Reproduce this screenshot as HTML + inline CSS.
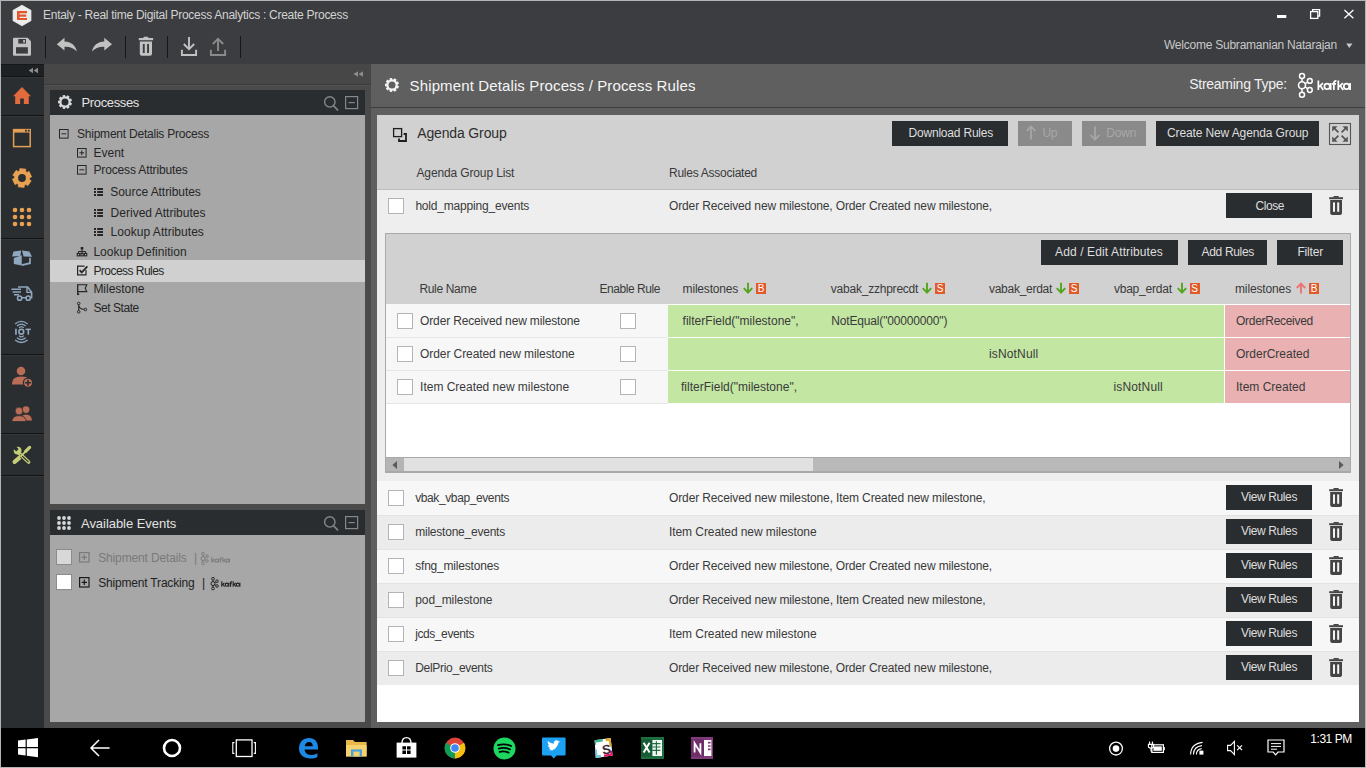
<!DOCTYPE html>
<html><head><meta charset="utf-8">
<style>
*{box-sizing:border-box;margin:0;padding:0}
html,body{width:1366px;height:768px;overflow:hidden;background:#b4b4b4;font-family:"Liberation Sans",sans-serif;position:relative}
.a{position:absolute}
.t{position:absolute;white-space:nowrap;line-height:1}
svg{position:absolute;overflow:visible}

</style></head><body>
<div class="a" style="left:1px;top:1px;width:1364px;height:63px;background:#3b3d40;"></div>
<div class="a" style="left:1px;top:64px;width:43px;height:664px;background:#2b2e31;"></div>
<div class="a" style="left:1px;top:64px;width:43px;height:12px;background:#1e2124;"></div>
<div class="a" style="left:1px;top:64px;width:43px;height:1px;background:#15171a;"></div>
<div class="a" style="left:1px;top:76px;width:43px;height:1px;background:#111315;"></div>
<div class="a" style="left:1px;top:77px;width:43px;height:1px;background:#34373a;"></div>
<div class="a" style="left:1px;top:115px;width:43px;height:1px;background:#111315;"></div>
<div class="a" style="left:1px;top:116px;width:43px;height:1px;background:#34373a;"></div>
<div class="a" style="left:1px;top:238px;width:43px;height:1px;background:#111315;"></div>
<div class="a" style="left:1px;top:239px;width:43px;height:1px;background:#34373a;"></div>
<div class="a" style="left:1px;top:354px;width:43px;height:1px;background:#111315;"></div>
<div class="a" style="left:1px;top:355px;width:43px;height:1px;background:#34373a;"></div>
<div class="a" style="left:1px;top:433px;width:43px;height:1px;background:#111315;"></div>
<div class="a" style="left:1px;top:434px;width:43px;height:1px;background:#34373a;"></div>
<div class="a" style="left:1px;top:475px;width:43px;height:1px;background:#111315;"></div>
<div class="a" style="left:1px;top:476px;width:43px;height:1px;background:#34373a;"></div>
<div class="a" style="left:44px;top:64px;width:327px;height:664px;background:#4a4a4a;"></div>
<div class="a" style="left:44px;top:64px;width:327px;height:20px;background:#474747;"></div>
<div class="a" style="left:44px;top:84px;width:327px;height:1px;background:#3a3a3a;"></div>
<div class="a" style="left:44px;top:85px;width:327px;height:1px;background:#545454;"></div>
<div class="a" style="left:50px;top:90px;width:315px;height:25px;background:#2a2d30;"></div>
<div class="a" style="left:50px;top:115px;width:315px;height:389px;background:#a7a7a7;"></div>
<div class="a" style="left:50px;top:260px;width:315px;height:22px;background:#d0d0d0;"></div>
<div class="a" style="left:50px;top:510px;width:315px;height:25px;background:#2a2d30;"></div>
<div class="a" style="left:50px;top:535px;width:315px;height:187px;background:#a7a7a7;"></div>
<div class="a" style="left:371px;top:64px;width:994px;height:664px;background:#5f5f5f;"></div>
<div class="a" style="left:371px;top:107px;width:994px;height:1px;background:#3d3d3d;"></div>
<div class="a" style="left:377px;top:115px;width:982px;height:607px;background:#ffffff;"></div>
<div class="a" style="left:377px;top:115px;width:982px;height:74px;background:#d1d1d1;"></div>
<div class="a" style="left:377px;top:189px;width:982px;height:1px;background:#bcbcbc;"></div>
<div class="a" style="left:377px;top:190px;width:982px;height:291px;background:#eeeeee;"></div>
<div class="a" style="left:385px;top:233px;width:966px;height:240px;background:#ffffff;border:1px solid #a9a9a9;"></div>
<div class="a" style="left:386px;top:234px;width:964px;height:70px;background:#d1d1d1;"></div>
<div class="a" style="left:386px;top:304px;width:964px;height:33px;background:#f7f7f7;"></div>
<div class="a" style="left:668px;top:304px;width:557px;height:33px;background:#c3e6a3;"></div>
<div class="a" style="left:1225px;top:304px;width:125px;height:33px;background:#e9b1b1;"></div>
<div class="a" style="left:386px;top:337px;width:282px;height:1px;background:#e6e6e6;"></div>
<div class="a" style="left:668px;top:337px;width:682px;height:1px;background:#ffffff;"></div>
<div class="a" style="left:386px;top:338px;width:964px;height:32px;background:#f7f7f7;"></div>
<div class="a" style="left:668px;top:338px;width:557px;height:32px;background:#c3e6a3;"></div>
<div class="a" style="left:1225px;top:338px;width:125px;height:32px;background:#e9b1b1;"></div>
<div class="a" style="left:386px;top:370px;width:282px;height:1px;background:#e6e6e6;"></div>
<div class="a" style="left:668px;top:370px;width:682px;height:1px;background:#ffffff;"></div>
<div class="a" style="left:386px;top:371px;width:964px;height:32px;background:#f7f7f7;"></div>
<div class="a" style="left:668px;top:371px;width:557px;height:32px;background:#c3e6a3;"></div>
<div class="a" style="left:1225px;top:371px;width:125px;height:32px;background:#e9b1b1;"></div>
<div class="a" style="left:386px;top:403px;width:282px;height:1px;background:#e6e6e6;"></div>
<div class="a" style="left:668px;top:403px;width:682px;height:1px;background:#ffffff;"></div>
<div class="a" style="left:668px;top:304px;width:682px;height:1px;background:#ffffff;"></div>
<div class="a" style="left:1224px;top:304px;width:1px;height:99px;background:#ffffff;"></div>
<div class="a" style="left:386px;top:457px;width:964px;height:15px;background:#a9a9a9;"></div>
<div class="a" style="left:386px;top:458px;width:964px;height:13px;background:#b9b9b9;"></div>
<div class="a" style="left:386px;top:458px;width:18px;height:13px;background:#b4b4b4;"></div>
<div class="a" style="left:404px;top:458px;width:409px;height:13px;background:#e1e1e1;"></div>
<div class="a" style="left:377px;top:481px;width:982px;height:34px;background:#f7f7f7;"></div>
<div class="a" style="left:377px;top:515px;width:982px;height:34px;background:#ececec;"></div>
<div class="a" style="left:377px;top:515px;width:982px;height:1px;background:#e3e3e3;"></div>
<div class="a" style="left:377px;top:549px;width:982px;height:34px;background:#f7f7f7;"></div>
<div class="a" style="left:377px;top:549px;width:982px;height:1px;background:#e3e3e3;"></div>
<div class="a" style="left:377px;top:583px;width:982px;height:34px;background:#ececec;"></div>
<div class="a" style="left:377px;top:583px;width:982px;height:1px;background:#e3e3e3;"></div>
<div class="a" style="left:377px;top:617px;width:982px;height:34px;background:#f7f7f7;"></div>
<div class="a" style="left:377px;top:617px;width:982px;height:1px;background:#e3e3e3;"></div>
<div class="a" style="left:377px;top:651px;width:982px;height:34px;background:#ececec;"></div>
<div class="a" style="left:377px;top:651px;width:982px;height:1px;background:#e3e3e3;"></div>
<div class="a" style="left:1px;top:728px;width:1364px;height:39px;background:#000000;"></div>
<div class="t" style="left:43px;top:9.00px;font-size:12px;color:#d2d2d2;font-weight:normal;font-family:'Liberation Sans';letter-spacing:-0.270px;">Entaly - Real time Digital Process Analytics : Create Process</div>
<div class="t" style="left:1164px;top:39.00px;font-size:12px;color:#c8c8c8;font-weight:normal;font-family:'Liberation Sans';letter-spacing:-0.237px;">Welcome Subramanian Natarajan</div>
<div class="t" style="left:81.5px;top:96.00px;font-size:13px;color:#e2e2e2;font-weight:normal;font-family:'Liberation Sans';letter-spacing:-0.356px;">Processes</div>
<div class="t" style="left:81px;top:517.00px;font-size:13px;color:#e2e2e2;font-weight:normal;font-family:'Liberation Sans';letter-spacing:-0.042px;">Available Events</div>
<div class="t" style="left:77px;top:128.00px;font-size:12px;color:#262626;font-weight:normal;font-family:'Liberation Sans';letter-spacing:-0.225px;">Shipment Detalis Process</div>
<div class="t" style="left:93.5px;top:147.00px;font-size:12px;color:#262626;font-weight:normal;font-family:'Liberation Sans';">Event</div>
<div class="t" style="left:93.5px;top:164.00px;font-size:12px;color:#262626;font-weight:normal;font-family:'Liberation Sans';letter-spacing:-0.145px;">Process Attributes</div>
<div class="t" style="left:110.3px;top:186.00px;font-size:12px;color:#262626;font-weight:normal;font-family:'Liberation Sans';letter-spacing:-0.052px;">Source Attributes</div>
<div class="t" style="left:110.6px;top:207.00px;font-size:12px;color:#262626;font-weight:normal;font-family:'Liberation Sans';letter-spacing:0.010px;">Derived Attributes</div>
<div class="t" style="left:110.6px;top:226.00px;font-size:12px;color:#262626;font-weight:normal;font-family:'Liberation Sans';letter-spacing:0.033px;">Lookup Attributes</div>
<div class="t" style="left:93.4px;top:246.00px;font-size:12px;color:#262626;font-weight:normal;font-family:'Liberation Sans';letter-spacing:0.033px;">Lookup Definition</div>
<div class="t" style="left:93.4px;top:265.00px;font-size:12px;color:#262626;font-weight:normal;font-family:'Liberation Sans';letter-spacing:-0.537px;">Process Rules</div>
<div class="t" style="left:93.4px;top:283.00px;font-size:12px;color:#262626;font-weight:normal;font-family:'Liberation Sans';letter-spacing:-0.029px;">Milestone</div>
<div class="t" style="left:93.4px;top:302.00px;font-size:12px;color:#262626;font-weight:normal;font-family:'Liberation Sans';letter-spacing:-0.442px;">Set State</div>
<div class="t" style="left:98.2px;top:552.00px;font-size:12px;color:#7a7a7a;font-weight:normal;font-family:'Liberation Sans';letter-spacing:-0.145px;">Shipment Details</div>
<div class="t" style="left:194px;top:552.00px;font-size:12px;color:#7a7a7a;font-weight:normal;font-family:'Liberation Sans';">|</div>
<div class="t" style="left:98.2px;top:577.00px;font-size:12px;color:#222222;font-weight:normal;font-family:'Liberation Sans';letter-spacing:-0.182px;">Shipment Tracking</div>
<div class="t" style="left:202px;top:577.00px;font-size:12px;color:#222222;font-weight:normal;font-family:'Liberation Sans';">|</div>
<div class="t" style="left:409.6px;top:78.00px;font-size:15px;color:#f6f6f6;font-weight:normal;font-family:'Liberation Sans';letter-spacing:0.126px;">Shipment Detalis Process / Process Rules</div>
<div class="t" style="left:1189.2px;top:77.00px;font-size:14px;color:#f0f0f0;font-weight:normal;font-family:'Liberation Sans';letter-spacing:-0.259px;">Streaming Type:</div>
<div class="t" style="left:417.2px;top:126.00px;font-size:14px;color:#2e2e2e;font-weight:normal;font-family:'Liberation Sans';letter-spacing:-0.140px;">Agenda Group</div>
<div class="t" style="left:416.5px;top:167.00px;font-size:12px;color:#3a3a3a;font-weight:normal;font-family:'Liberation Sans';letter-spacing:-0.134px;">Agenda Group List</div>
<div class="t" style="left:669px;top:167.00px;font-size:12px;color:#3a3a3a;font-weight:normal;font-family:'Liberation Sans';letter-spacing:-0.254px;">Rules Associated</div>
<div class="t" style="left:415.4px;top:200.00px;font-size:12px;color:#3a3a3a;font-weight:normal;font-family:'Liberation Sans';letter-spacing:-0.191px;">hold_mapping_events</div>
<div class="t" style="left:669px;top:200.00px;font-size:12px;color:#3a3a3a;font-weight:normal;font-family:'Liberation Sans';letter-spacing:-0.135px;">Order Received new milestone, Order Created new milestone,</div>
<div class="a" style="left:892px;top:121px;width:116px;height:25px;background:#2a2d30;"></div>
<div class="a" style="left:1156px;top:121px;width:163px;height:25px;background:#2a2d30;"></div>
<div class="a" style="left:1226px;top:193px;width:86px;height:25px;background:#2a2d30;"></div>
<div class="a" style="left:1041px;top:240px;width:137px;height:25px;background:#2a2d30;"></div>
<div class="a" style="left:1188px;top:240px;width:79px;height:25px;background:#2a2d30;"></div>
<div class="a" style="left:1277px;top:240px;width:66px;height:25px;background:#2a2d30;"></div>
<div class="a" style="left:1018px;top:121px;width:54px;height:25px;background:#8a8a8a;"></div>
<div class="a" style="left:1082px;top:121px;width:64px;height:25px;background:#8a8a8a;"></div>
<div class="t" style="left:908.5px;top:127.00px;font-size:12px;color:#dedede;font-weight:normal;font-family:'Liberation Sans';letter-spacing:-0.199px;">Download Rules</div>
<div class="t" style="left:1042.5px;top:127.00px;font-size:12px;color:#a8a8a8;font-weight:normal;font-family:'Liberation Sans';letter-spacing:-0.522px;">Up</div>
<div class="t" style="left:1106.2px;top:127.00px;font-size:12px;color:#a8a8a8;font-weight:normal;font-family:'Liberation Sans';letter-spacing:-0.147px;">Down</div>
<div class="t" style="left:1167px;top:127.00px;font-size:12px;color:#dedede;font-weight:normal;font-family:'Liberation Sans';letter-spacing:-0.121px;">Create New Agenda Group</div>
<div class="t" style="left:1255.6px;top:200.00px;font-size:12px;color:#dedede;font-weight:normal;font-family:'Liberation Sans';letter-spacing:-0.458px;">Close</div>
<div class="t" style="left:1055px;top:246.00px;font-size:12px;color:#dedede;font-weight:normal;font-family:'Liberation Sans';letter-spacing:0.124px;">Add / Edit Attributes</div>
<div class="t" style="left:1201.5px;top:246.00px;font-size:12px;color:#dedede;font-weight:normal;font-family:'Liberation Sans';letter-spacing:-0.319px;">Add Rules</div>
<div class="t" style="left:1297.4px;top:246.00px;font-size:12px;color:#dedede;font-weight:normal;font-family:'Liberation Sans';letter-spacing:-0.145px;">Filter</div>
<div class="t" style="left:419.4px;top:283.00px;font-size:12px;color:#3a3a3a;font-weight:normal;font-family:'Liberation Sans';letter-spacing:-0.326px;">Rule Name</div>
<div class="t" style="left:599.5px;top:283.00px;font-size:12px;color:#3a3a3a;font-weight:normal;font-family:'Liberation Sans';letter-spacing:-0.454px;">Enable Rule</div>
<div class="t" style="left:682.6px;top:283.00px;font-size:12px;color:#3a3a3a;font-weight:normal;font-family:'Liberation Sans';letter-spacing:-0.186px;">milestones</div>
<div class="t" style="left:830.8px;top:283.00px;font-size:12px;color:#3a3a3a;font-weight:normal;font-family:'Liberation Sans';letter-spacing:-0.222px;">vabak_zzhprecdt</div>
<div class="t" style="left:989px;top:283.00px;font-size:12px;color:#3a3a3a;font-weight:normal;font-family:'Liberation Sans';letter-spacing:-0.277px;">vabak_erdat</div>
<div class="t" style="left:1113.9px;top:283.00px;font-size:12px;color:#3a3a3a;font-weight:normal;font-family:'Liberation Sans';letter-spacing:-0.205px;">vbap_erdat</div>
<div class="t" style="left:1235px;top:283.00px;font-size:12px;color:#3a3a3a;font-weight:normal;font-family:'Liberation Sans';letter-spacing:-0.136px;">milestones</div>
<div class="t" style="left:420.1px;top:315.00px;font-size:12px;color:#3a3a3a;font-weight:normal;font-family:'Liberation Sans';letter-spacing:-0.156px;">Order Received new milestone</div>
<div class="t" style="left:420.1px;top:348.00px;font-size:12px;color:#3a3a3a;font-weight:normal;font-family:'Liberation Sans';letter-spacing:-0.083px;">Order Created new milestone</div>
<div class="t" style="left:420.1px;top:381.00px;font-size:12px;color:#3a3a3a;font-weight:normal;font-family:'Liberation Sans';letter-spacing:-0.016px;">Item Created new milestone</div>
<div class="t" style="left:682.6px;top:315.00px;font-size:12px;color:#3a3a3a;font-weight:normal;font-family:'Liberation Sans';letter-spacing:0.005px;">filterField("milestone",</div>
<div class="t" style="left:831.3px;top:315.00px;font-size:12px;color:#3a3a3a;font-weight:normal;font-family:'Liberation Sans';letter-spacing:-0.164px;">NotEqual("00000000")</div>
<div class="t" style="left:1236px;top:315.00px;font-size:12px;color:#3a3a3a;font-weight:normal;font-family:'Liberation Sans';letter-spacing:-0.285px;">OrderReceived</div>
<div class="t" style="left:989px;top:348.00px;font-size:12px;color:#3a3a3a;font-weight:normal;font-family:'Liberation Sans';letter-spacing:0.154px;">isNotNull</div>
<div class="t" style="left:1236px;top:348.00px;font-size:12px;color:#3a3a3a;font-weight:normal;font-family:'Liberation Sans';">OrderCreated</div>
<div class="t" style="left:681px;top:381.00px;font-size:12px;color:#3a3a3a;font-weight:normal;font-family:'Liberation Sans';letter-spacing:0.005px;">filterField("milestone",</div>
<div class="t" style="left:1113.5px;top:381.00px;font-size:12px;color:#3a3a3a;font-weight:normal;font-family:'Liberation Sans';letter-spacing:0.154px;">isNotNull</div>
<div class="t" style="left:1236px;top:381.00px;font-size:12px;color:#3a3a3a;font-weight:normal;font-family:'Liberation Sans';">Item Created</div>
<div class="t" style="left:415.2px;top:492.00px;font-size:12px;color:#3a3a3a;font-weight:normal;font-family:'Liberation Sans';letter-spacing:-0.392px;">vbak_vbap_events</div>
<div class="t" style="left:669px;top:492.00px;font-size:12px;color:#3a3a3a;font-weight:normal;font-family:'Liberation Sans';letter-spacing:-0.123px;">Order Received new milestone, Item Created new milestone,</div>
<div class="a" style="left:1226px;top:485px;width:86px;height:25px;background:#2a2d30;"></div>
<div class="t" style="left:1241px;top:491.00px;font-size:12px;color:#dedede;font-weight:normal;font-family:'Liberation Sans';letter-spacing:-0.381px;">View Rules</div>
<div class="t" style="left:415.2px;top:526.00px;font-size:12px;color:#3a3a3a;font-weight:normal;font-family:'Liberation Sans';letter-spacing:-0.224px;">milestone_events</div>
<div class="t" style="left:669px;top:526.00px;font-size:12px;color:#3a3a3a;font-weight:normal;font-family:'Liberation Sans';letter-spacing:-0.073px;">Item Created new milestone</div>
<div class="a" style="left:1226px;top:519px;width:86px;height:25px;background:#2a2d30;"></div>
<div class="t" style="left:1241px;top:525.00px;font-size:12px;color:#dedede;font-weight:normal;font-family:'Liberation Sans';letter-spacing:-0.381px;">View Rules</div>
<div class="t" style="left:415.2px;top:560.00px;font-size:12px;color:#3a3a3a;font-weight:normal;font-family:'Liberation Sans';letter-spacing:-0.195px;">sfng_milestones</div>
<div class="t" style="left:669px;top:560.00px;font-size:12px;color:#3a3a3a;font-weight:normal;font-family:'Liberation Sans';letter-spacing:-0.135px;">Order Received new milestone, Order Created new milestone,</div>
<div class="a" style="left:1226px;top:553px;width:86px;height:25px;background:#2a2d30;"></div>
<div class="t" style="left:1241px;top:559.00px;font-size:12px;color:#dedede;font-weight:normal;font-family:'Liberation Sans';letter-spacing:-0.381px;">View Rules</div>
<div class="t" style="left:415.2px;top:594.00px;font-size:12px;color:#3a3a3a;font-weight:normal;font-family:'Liberation Sans';letter-spacing:-0.059px;">pod_milestone</div>
<div class="t" style="left:669px;top:594.00px;font-size:12px;color:#3a3a3a;font-weight:normal;font-family:'Liberation Sans';letter-spacing:-0.123px;">Order Received new milestone, Item Created new milestone,</div>
<div class="a" style="left:1226px;top:587px;width:86px;height:25px;background:#2a2d30;"></div>
<div class="t" style="left:1241px;top:593.00px;font-size:12px;color:#dedede;font-weight:normal;font-family:'Liberation Sans';letter-spacing:-0.381px;">View Rules</div>
<div class="t" style="left:415.2px;top:628.00px;font-size:12px;color:#3a3a3a;font-weight:normal;font-family:'Liberation Sans';letter-spacing:-0.416px;">jcds_events</div>
<div class="t" style="left:669px;top:628.00px;font-size:12px;color:#3a3a3a;font-weight:normal;font-family:'Liberation Sans';letter-spacing:-0.073px;">Item Created new milestone</div>
<div class="a" style="left:1226px;top:621px;width:86px;height:25px;background:#2a2d30;"></div>
<div class="t" style="left:1241px;top:627.00px;font-size:12px;color:#dedede;font-weight:normal;font-family:'Liberation Sans';letter-spacing:-0.381px;">View Rules</div>
<div class="t" style="left:415.2px;top:662.00px;font-size:12px;color:#3a3a3a;font-weight:normal;font-family:'Liberation Sans';letter-spacing:-0.291px;">DelPrio_events</div>
<div class="t" style="left:669px;top:662.00px;font-size:12px;color:#3a3a3a;font-weight:normal;font-family:'Liberation Sans';letter-spacing:-0.135px;">Order Received new milestone, Order Created new milestone,</div>
<div class="a" style="left:1226px;top:655px;width:86px;height:25px;background:#2a2d30;"></div>
<div class="t" style="left:1241px;top:661.00px;font-size:12px;color:#dedede;font-weight:normal;font-family:'Liberation Sans';letter-spacing:-0.381px;">View Rules</div>
<div class="t" style="left:1310.3px;top:733.00px;font-size:12px;color:#ffffff;font-weight:normal;font-family:'Liberation Sans';letter-spacing:-0.458px;">1:31 PM</div>
<svg style="left:0px;top:0px;" width="44" height="30" viewBox="0 0 44 30"><path d="M22.00,5.40 L30.75,10.45 L30.75,20.55 L22.00,25.60 L13.25,20.55 L13.25,10.45Z" fill="#ececec" stroke="#ececec" stroke-width="1.2" stroke-linejoin="round"/><path d="M17,11 H27 V13.2 H19.6 V14.6 H26.2 V16.7 H19.6 V17.9 H27 V20.1 H17 Z" fill="#e2582a"/></svg>
<svg style="left:1270px;top:0px;" width="96" height="30" viewBox="0 0 96 30"><rect x="7" y="15" width="9.3" height="3" fill="#fff"/><rect x="40.6" y="11.6" width="7.2" height="6.8" fill="none" stroke="#fff" stroke-width="1.3"/><path d="M42.6,11.6 V9.6 H49.6 V16.2 H47.8" fill="none" stroke="#fff" stroke-width="1.3"/><path d="M74.4,10 L83.4,18.2 M83.4,10 L74.4,18.2" stroke="#fff" stroke-width="1.3"/></svg>
<svg style="left:12px;top:37px;" width="20" height="20" viewBox="0 0 20 20"><path d="M1,2 Q1,0.8 2.2,0.8 H15.6 L19,4.2 V17.6 Q19,18.8 17.8,18.8 H2.2 Q1,18.8 1,17.6 Z" fill="#c2c2c2"/><rect x="6.3" y="2" width="7.7" height="4.6" fill="#3b3d40"/><rect x="11.2" y="3" width="1.7" height="2.6" fill="#c2c2c2"/><rect x="4" y="10.2" width="11.9" height="6.4" fill="#3b3d40"/></svg>
<div class="a" style="left:45px;top:36px;width:1px;height:22px;background:#161718;"></div>
<div class="a" style="left:125px;top:36px;width:1px;height:22px;background:#161718;"></div>
<div class="a" style="left:167px;top:36px;width:1px;height:22px;background:#161718;"></div>
<div class="a" style="left:240px;top:36px;width:1px;height:22px;background:#161718;"></div>
<svg style="left:56px;top:37px;" width="22" height="17" viewBox="0 0 22 17"><path d="M0.8,7.2 L8.5,0.8 V4.6 C15,4.8 19.8,8.6 20.8,14.6 C18,11.2 13.8,9.6 8.5,9.8 V13.6 Z" fill="#c2c2c2"/></svg>
<svg style="left:91px;top:37px;" width="22" height="17" viewBox="0 0 22 17"><path d="M21,7.2 L13.3,0.8 V4.6 C6.8,4.8 2,8.6 1,14.6 C3.8,11.2 8,9.6 13.3,9.8 V13.6 Z" fill="#c2c2c2"/></svg>
<svg style="left:138px;top:36px;" width="16" height="21" viewBox="0 0 16 21"><rect x="0.8" y="2" width="14.3" height="2.2" fill="#c2c2c2"/><rect x="5.4" y="0.8" width="5" height="2" rx="0.8" fill="#c2c2c2"/><path d="M1.8,5.4 H14 V17.8 Q14,19.8 12,19.8 H3.8 Q1.8,19.8 1.8,17.8 Z" fill="#c2c2c2"/><rect x="4.8" y="8" width="1.9" height="9" fill="#3b3d40"/><rect x="9.1" y="8" width="1.9" height="9" fill="#3b3d40"/></svg>
<svg style="left:180px;top:36px;" width="18" height="21" viewBox="0 0 18 21"><path d="M9,1 V13 M3.8,8 L9,13.2 L14.2,8" fill="none" stroke="#c2c2c2" stroke-width="1.9"/><path d="M1.9,13.8 V19 H16.1 V13.8" fill="none" stroke="#c2c2c2" stroke-width="1.9"/></svg>
<svg style="left:209px;top:36px;" width="18" height="21" viewBox="0 0 18 21"><path d="M9,15 V3 M3.8,8 L9,2.8 L14.2,8" fill="none" stroke="#8a8a8a" stroke-width="1.9"/><path d="M1.9,13.8 V19 H16.1 V13.8" fill="none" stroke="#8a8a8a" stroke-width="1.9"/></svg>
<svg style="left:1345px;top:42px;" width="12" height="8" viewBox="0 0 12 8"><path d="M1.2,1.4 H7.4 L4.3,6 Z" fill="#c8c8c8"/></svg>
<svg style="left:26px;top:66px;" width="14" height="10" viewBox="0 0 14 10"><path d="M7,1.8 V7.2 L2.6,4.5 Z M12,1.8 V7.2 L7.6,4.5 Z" fill="#8c8c8c"/></svg>
<svg style="left:350px;top:69px;" width="14" height="10" viewBox="0 0 14 10"><path d="M8,2.2 V7.8 L3.4,5 Z M13,2.2 V7.8 L8.4,5 Z" fill="#8c8c8c"/></svg>
<svg style="left:12px;top:86px;" width="20" height="20" viewBox="0 0 20 20"><path d="M10,1 L19,10.2 H16.8 V18 H11.8 V12.4 H8.2 V18 H3.2 V10.2 H1 Z" fill="#e16b3c"/></svg>
<svg style="left:12px;top:128px;" width="20" height="20" viewBox="0 0 20 20"><rect x="1.6" y="1.6" width="16.6" height="17" fill="none" stroke="#e39f58" stroke-width="1.5"/><rect x="1" y="1" width="18" height="3.6" fill="#e39f58"/><rect x="13" y="1.8" width="1.8" height="1.8" fill="#2b2e31"/><rect x="15.9" y="1.8" width="1.8" height="1.8" fill="#2b2e31"/></svg>
<svg style="left:12px;top:167.5px;" width="20" height="20" viewBox="0 0 20 20"><path d="M7.73,2.85 L7.87,0.64 L13.78,1.17 L13.52,3.38 L15.05,4.46 L17.04,3.47 L19.53,8.86 L17.50,9.73 L17.33,11.60 L19.17,12.83 L15.76,17.68 L13.98,16.36 L12.27,17.15 L12.13,19.36 L6.22,18.83 L6.48,16.62 L4.95,15.54 L2.96,16.53 L0.47,11.14 L2.50,10.27 L2.67,8.40 L0.83,7.17 L4.24,2.32 L6.02,3.64Z" fill="#e8a150" stroke="#e8a150" stroke-width="0.8" stroke-linejoin="round"/><circle cx="10" cy="10" r="3.9" fill="#2b2e31"/></svg>
<svg style="left:12px;top:207px;" width="20" height="20" viewBox="0 0 20 20"><circle cx="3" cy="3" r="2.3" fill="#e8a150"/><circle cx="3" cy="10" r="2.3" fill="#e8a150"/><circle cx="3" cy="17" r="2.3" fill="#e8a150"/><circle cx="10" cy="3" r="2.3" fill="#e8a150"/><circle cx="10" cy="10" r="2.3" fill="#e8a150"/><circle cx="10" cy="17" r="2.3" fill="#e8a150"/><circle cx="17" cy="3" r="2.3" fill="#e8a150"/><circle cx="17" cy="10" r="2.3" fill="#e8a150"/><circle cx="17" cy="17" r="2.3" fill="#e8a150"/></svg>
<svg style="left:11px;top:249px;" width="22" height="18" viewBox="0 0 22 18"><path d="M1.1,7.6 L2.5,2.6 L10.1,1.4 L9.5,7 Z" fill="#8fa7bf"/><path d="M10.9,1.4 L18.3,2.5 L21.1,7.8 L12.6,7.5 Z" fill="#8fa7bf"/><path d="M2.8,8.9 L10.75,6.2 V16.6 L2.8,15 Z" fill="#8fa7bf"/><path d="M10.75,16.1 L19,14.2 V8.8" fill="none" stroke="#8fa7bf" stroke-width="1.7"/></svg>
<svg style="left:10px;top:284px;" width="24" height="18" viewBox="0 0 24 18"><path d="M8,3 H17.6 L21.6,8.2 V13.8 H8" fill="none" stroke="#8fa7bf" stroke-width="1.6"/><path d="M17,3.2 V8.4 H21.6" fill="none" stroke="#8fa7bf" stroke-width="1.4"/><path d="M1.4,5.2 H11 M2.6,8 H11 M4,10.8 H9" stroke="#8fa7bf" stroke-width="1.4"/><circle cx="9.6" cy="14.2" r="2.1" fill="#2b2e31" stroke="#8fa7bf" stroke-width="1.5"/><circle cx="18.2" cy="14.2" r="2.1" fill="#2b2e31" stroke="#8fa7bf" stroke-width="1.5"/></svg>
<svg style="left:13px;top:320px;" width="20" height="24" viewBox="0 0 20 24"><path d="M2.1,3.9 Q8.3,-1.1 14.6,3.9 M4,6 Q8.3,2.4 12.7,6 M6,7.9 Q8.3,5.3 10.8,7.9" fill="none" stroke="#8fa7bf" stroke-width="1.3"/><path d="M6,15.6 Q8.3,18.2 10.8,15.6 M4,17.8 Q8.3,21.4 12.7,17.8 M2.1,20 Q8.3,25 14.6,20" fill="none" stroke="#8fa7bf" stroke-width="1.3"/><rect x="2.1" y="8.7" width="1.7" height="6" fill="#8fa7bf"/><circle cx="8.3" cy="11.7" r="2.4" fill="none" stroke="#8fa7bf" stroke-width="1.6"/><rect x="12.5" y="8.7" width="5.4" height="1.4" fill="#8fa7bf"/><rect x="14.5" y="8.7" width="1.6" height="6" fill="#8fa7bf"/></svg>
<svg style="left:11px;top:366px;" width="23" height="22" viewBox="0 0 23 22"><circle cx="10" cy="5" r="4.3" fill="#b96c56"/><path d="M1,17.6 Q1,10.6 10,10.6 Q17,10.6 18.6,14 L18.6,18.6 H1 Z" fill="#b96c56"/><circle cx="17" cy="16.8" r="4.6" fill="#b96c56" stroke="#2b2e31" stroke-width="1.2"/><path d="M17,13.8 V19.8 M14,16.8 H20" stroke="#2b2e31" stroke-width="1.6"/></svg>
<svg style="left:11px;top:404px;" width="22" height="19" viewBox="0 0 22 19"><circle cx="15" cy="5.6" r="3.4" fill="#b96c56"/><path d="M9,16.6 Q9.6,10.6 15,10.6 Q20.6,10.6 21,16.6 Z" fill="#b96c56"/><circle cx="8" cy="7" r="3.9" fill="#b96c56" stroke="#2b2e31" stroke-width="0.8"/><path d="M0.8,17.6 Q1.2,11.6 8,11.6 Q14.8,11.6 15.2,17.6 Z" fill="#b96c56" stroke="#2b2e31" stroke-width="0.8"/></svg>
<svg style="left:12px;top:445px;" width="20" height="20" viewBox="0 0 20 20"><path d="M7.2,8.4 L16.6,17" stroke="#c6cd78" stroke-width="3.6" stroke-linecap="round"/><path d="M8.6,9.8 L16.2,16.6" stroke="#2b2e31" stroke-width="1.2" stroke-linecap="round"/><circle cx="5.6" cy="5.6" r="3.9" fill="#c6cd78"/><path d="M1,3.2 L4.2,6.4 L6.6,4 L3.4,0.8 Z" fill="#2b2e31"/><path d="M2.6,16.8 L7.6,12.6" stroke="#c6cd78" stroke-width="4.2" stroke-linecap="round"/><path d="M7.6,12.6 L13.6,6.4" stroke="#c6cd78" stroke-width="1.8"/><path d="M13.6,6.4 L17.6,2.4" stroke="#c6cd78" stroke-width="3.2" stroke-linecap="round"/><path d="M8.2,12 L10,13.6" stroke="#2b2e31" stroke-width="0.9"/></svg>
<svg style="left:58px;top:95px;" width="14" height="14" viewBox="0 0 14 14"><path d="M12.58,7.47 L13.99,8.24 L13.15,10.56 L11.57,10.23 L10.97,10.95 L11.56,12.44 L9.42,13.67 L8.43,12.42 L7.50,12.58 L6.99,14.10 L4.57,13.67 L4.61,12.06 L3.80,11.60 L2.43,12.43 L0.85,10.54 L1.91,9.34 L1.59,8.46 L0.01,8.23 L0.01,5.76 L1.60,5.53 L1.92,4.65 L0.85,3.44 L2.44,1.56 L3.81,2.40 L4.62,1.93 L4.58,0.33 L7.01,-0.10 L7.51,1.42 L8.44,1.59 L9.43,0.33 L11.57,1.57 L10.98,3.06 L11.58,3.78 L13.15,3.46 L13.99,5.77 L12.58,6.54Z" fill="#d8d8d8"/><circle cx="7" cy="7" r="3.5" fill="#2a2d30"/></svg>
<svg style="left:318px;top:90px;" width="48" height="25" viewBox="0 0 48 25"><circle cx="11.8" cy="11.9" r="5.2" fill="none" stroke="#85888b" stroke-width="1.4"/><path d="M15.6,15.8 L20,20.4" stroke="#85888b" stroke-width="1.6"/><rect x="27.6" y="6.6" width="12" height="12" fill="none" stroke="#85888b" stroke-width="1.2"/><path d="M30.6,12.6 H36.8" stroke="#85888b" stroke-width="1.2"/></svg>
<svg style="left:318px;top:510px;" width="48" height="25" viewBox="0 0 48 25"><circle cx="11.8" cy="11.9" r="5.2" fill="none" stroke="#85888b" stroke-width="1.4"/><path d="M15.6,15.8 L20,20.4" stroke="#85888b" stroke-width="1.6"/><rect x="27.6" y="6.6" width="12" height="12" fill="none" stroke="#85888b" stroke-width="1.2"/><path d="M30.6,12.6 H36.8" stroke="#85888b" stroke-width="1.2"/></svg>
<svg style="left:59px;top:129px;" width="10" height="10" viewBox="0 0 10 10"><rect x="0.5" y="0.5" width="8.6" height="8.6" fill="none" stroke="#262626" stroke-width="1"/><path d="M2.4,4.8 H7.2" stroke="#262626" stroke-width="1"/></svg>
<svg style="left:77px;top:148px;" width="10" height="10" viewBox="0 0 10 10"><rect x="0.5" y="0.5" width="8.6" height="8.6" fill="none" stroke="#262626" stroke-width="1"/><path d="M2.4,4.8 H7.2" stroke="#262626" stroke-width="1"/><path d="M4.8,2.4 V7.2" stroke="#262626" stroke-width="1"/></svg>
<svg style="left:77px;top:165px;" width="10" height="10" viewBox="0 0 10 10"><rect x="0.5" y="0.5" width="8.6" height="8.6" fill="none" stroke="#262626" stroke-width="1"/><path d="M2.4,4.8 H7.2" stroke="#262626" stroke-width="1"/></svg>
<svg style="left:94px;top:188px;" width="10" height="8" viewBox="0 0 10 8"><rect x="0" y="0" width="2" height="2" fill="#262626"/><rect x="3.2" y="0" width="5.8" height="2" fill="#262626"/><rect x="0" y="3" width="2" height="2" fill="#262626"/><rect x="3.2" y="3" width="5.8" height="2" fill="#262626"/><rect x="0" y="6" width="2" height="2" fill="#262626"/><rect x="3.2" y="6" width="5.8" height="2" fill="#262626"/></svg>
<svg style="left:94px;top:209px;" width="10" height="8" viewBox="0 0 10 8"><rect x="0" y="0" width="2" height="2" fill="#262626"/><rect x="3.2" y="0" width="5.8" height="2" fill="#262626"/><rect x="0" y="3" width="2" height="2" fill="#262626"/><rect x="3.2" y="3" width="5.8" height="2" fill="#262626"/><rect x="0" y="6" width="2" height="2" fill="#262626"/><rect x="3.2" y="6" width="5.8" height="2" fill="#262626"/></svg>
<svg style="left:94px;top:228px;" width="10" height="8" viewBox="0 0 10 8"><rect x="0" y="0" width="2" height="2" fill="#262626"/><rect x="3.2" y="0" width="5.8" height="2" fill="#262626"/><rect x="0" y="3" width="2" height="2" fill="#262626"/><rect x="3.2" y="3" width="5.8" height="2" fill="#262626"/><rect x="0" y="6" width="2" height="2" fill="#262626"/><rect x="3.2" y="6" width="5.8" height="2" fill="#262626"/></svg>
<svg style="left:77px;top:247px;" width="11" height="10" viewBox="0 0 11 10"><rect x="3.7" y="0" width="2.6" height="2.6" fill="#262626"/><path d="M5,2.4 V4.4 M1.4,6.4 V4.5 H8.6 V6.4 M5,4.4 V6.4" fill="none" stroke="#262626" stroke-width="1"/><rect x="0.25" y="6.45" width="2.4" height="2.4" fill="none" stroke="#262626" stroke-width="1.1"/><rect x="3.8" y="6.45" width="2.4" height="2.4" fill="none" stroke="#262626" stroke-width="1.1"/><rect x="7.35" y="6.45" width="2.4" height="2.4" fill="none" stroke="#262626" stroke-width="1.1"/></svg>
<svg style="left:77px;top:264.5px;" width="12" height="12" viewBox="0 0 12 12"><path d="M9,5 V9.8 H0.6 V1.2 H7.6" fill="none" stroke="#262626" stroke-width="1.2"/><path d="M2.6,5.2 L4.7,7.4 L10.4,1.4" fill="none" stroke="#262626" stroke-width="1.7"/></svg>
<svg style="left:77px;top:284px;" width="12" height="12" viewBox="0 0 12 12"><path d="M0.7,0.2 V10.8" stroke="#262626" stroke-width="1.3"/><path d="M0.7,0.8 H9.8 L8.2,4.2 L9.8,7.6 H0.7" fill="none" stroke="#262626" stroke-width="1.1"/><path d="M0,10.3 H2.2" stroke="#262626" stroke-width="1.5"/></svg>
<svg style="left:77px;top:302px;" width="11" height="12" viewBox="0 0 11 12"><circle cx="1.7" cy="1.5" r="1.3" fill="none" stroke="#262626" stroke-width="1"/><circle cx="1.7" cy="9.8" r="1.3" fill="none" stroke="#262626" stroke-width="1"/><circle cx="8.4" cy="7.5" r="1.3" fill="none" stroke="#262626" stroke-width="1"/><path d="M1.7,2.8 V8.5 M1.9,4.2 Q2.8,7.2 7.1,7.5" fill="none" stroke="#262626" stroke-width="1.15"/></svg>
<svg style="left:57px;top:515.5px;" width="14" height="14" viewBox="0 0 14 14"><circle cx="2" cy="2" r="1.9" fill="#d8d8d8"/><circle cx="2" cy="7" r="1.9" fill="#d8d8d8"/><circle cx="2" cy="12" r="1.9" fill="#d8d8d8"/><circle cx="7" cy="2" r="1.9" fill="#d8d8d8"/><circle cx="7" cy="7" r="1.9" fill="#d8d8d8"/><circle cx="7" cy="12" r="1.9" fill="#d8d8d8"/><circle cx="12" cy="2" r="1.9" fill="#d8d8d8"/><circle cx="12" cy="7" r="1.9" fill="#d8d8d8"/><circle cx="12" cy="12" r="1.9" fill="#d8d8d8"/></svg>
<div class="a" style="left:56px;top:549px;width:16px;height:16px;background:#d8d8d8;border:1px solid #8c8c8c;"></div>
<div class="a" style="left:56px;top:574px;width:16px;height:16px;background:#ffffff;border:1px solid #8c8c8c;"></div>
<svg style="left:79px;top:552px;" width="11" height="11" viewBox="0 0 11 11"><rect x="0.6" y="0.6" width="9.4" height="9.4" fill="none" stroke="#7a7a7a" stroke-width="1.2"/><path d="M2.6,5.3 H8 M5.3,2.6 V8" stroke="#7a7a7a" stroke-width="1.2"/></svg>
<svg style="left:79px;top:577px;" width="11" height="11" viewBox="0 0 11 11"><rect x="0.6" y="0.6" width="9.4" height="9.4" fill="none" stroke="#1a1a1a" stroke-width="1.2"/><path d="M2.6,5.3 H8 M5.3,2.6 V8" stroke="#1a1a1a" stroke-width="1.2"/></svg>
<svg style="left:200px;top:552.4px;" width="9" height="14" viewBox="0 0 9 14"><circle cx="3" cy="1.8" r="1.4" fill="none" stroke="#7c7c7c" stroke-width="0.9"/><circle cx="3" cy="6.6" r="2" fill="none" stroke="#7c7c7c" stroke-width="1"/><circle cx="3" cy="11.5" r="1.4" fill="none" stroke="#7c7c7c" stroke-width="0.9"/><circle cx="7" cy="4.2" r="1.3" fill="none" stroke="#7c7c7c" stroke-width="0.9"/><circle cx="7" cy="9" r="1.3" fill="none" stroke="#7c7c7c" stroke-width="0.9"/><path d="M3,3.2 V4.6 M3,8.6 V10.1 M4.6,5.6 L5.9,4.9 M4.6,7.6 L5.9,8.3" stroke="#7c7c7c" stroke-width="0.9"/></svg>
<svg style="left:211px;top:556.5749999999999px;" width="19.0" height="6.09" viewBox="0 0 34.3 11"><path d="M1.35,0.6 V10 M1.9,7 L6,3.2 M3.4,5.8 L6.3,10" fill="none" stroke="#7c7c7c" stroke-width="1.9"/><circle cx="10.2" cy="6.5" r="2.75" fill="none" stroke="#7c7c7c" stroke-width="1.9"/><path d="M13.8,3 V10" stroke="#7c7c7c" stroke-width="1.9"/><path d="M17,10 V3.2 Q17,0.9 19.6,1 M15.2,3.9 H19.2" fill="none" stroke="#7c7c7c" stroke-width="1.9"/><path d="M21.5,0.6 V10 M22.05,7 L26.15,3.2 M23.55,5.8 L26.45,10" fill="none" stroke="#7c7c7c" stroke-width="1.9"/><circle cx="29.8" cy="6.5" r="2.75" fill="none" stroke="#7c7c7c" stroke-width="1.9"/><path d="M33.4,3 V10" stroke="#7c7c7c" stroke-width="1.9"/></svg>
<svg style="left:210px;top:577.4px;" width="9" height="14" viewBox="0 0 9 14"><circle cx="3" cy="1.8" r="1.4" fill="none" stroke="#1e1e1e" stroke-width="0.9"/><circle cx="3" cy="6.6" r="2" fill="none" stroke="#1e1e1e" stroke-width="1"/><circle cx="3" cy="11.5" r="1.4" fill="none" stroke="#1e1e1e" stroke-width="0.9"/><circle cx="7" cy="4.2" r="1.3" fill="none" stroke="#1e1e1e" stroke-width="0.9"/><circle cx="7" cy="9" r="1.3" fill="none" stroke="#1e1e1e" stroke-width="0.9"/><path d="M3,3.2 V4.6 M3,8.6 V10.1 M4.6,5.6 L5.9,4.9 M4.6,7.6 L5.9,8.3" stroke="#1e1e1e" stroke-width="0.9"/></svg>
<svg style="left:220.6px;top:581.4649999999999px;" width="19.4" height="6.22" viewBox="0 0 34.3 11"><path d="M1.35,0.6 V10 M1.9,7 L6,3.2 M3.4,5.8 L6.3,10" fill="none" stroke="#1e1e1e" stroke-width="1.9"/><circle cx="10.2" cy="6.5" r="2.75" fill="none" stroke="#1e1e1e" stroke-width="1.9"/><path d="M13.8,3 V10" stroke="#1e1e1e" stroke-width="1.9"/><path d="M17,10 V3.2 Q17,0.9 19.6,1 M15.2,3.9 H19.2" fill="none" stroke="#1e1e1e" stroke-width="1.9"/><path d="M21.5,0.6 V10 M22.05,7 L26.15,3.2 M23.55,5.8 L26.45,10" fill="none" stroke="#1e1e1e" stroke-width="1.9"/><circle cx="29.8" cy="6.5" r="2.75" fill="none" stroke="#1e1e1e" stroke-width="1.9"/><path d="M33.4,3 V10" stroke="#1e1e1e" stroke-width="1.9"/></svg>
<svg style="left:385px;top:78px;" width="14" height="14" viewBox="0 0 14 14"><path d="M12.58,7.47 L13.99,8.24 L13.15,10.56 L11.57,10.23 L10.97,10.95 L11.56,12.44 L9.42,13.67 L8.43,12.42 L7.50,12.58 L6.99,14.10 L4.57,13.67 L4.61,12.06 L3.80,11.60 L2.43,12.43 L0.85,10.54 L1.91,9.34 L1.59,8.46 L0.01,8.23 L0.01,5.76 L1.60,5.53 L1.92,4.65 L0.85,3.44 L2.44,1.56 L3.81,2.40 L4.62,1.93 L4.58,0.33 L7.01,-0.10 L7.51,1.42 L8.44,1.59 L9.43,0.33 L11.57,1.57 L10.98,3.06 L11.58,3.78 L13.15,3.46 L13.99,5.77 L12.58,6.54Z" fill="#f4f4f4"/><circle cx="7" cy="7" r="3.5" fill="#5f5f5f"/></svg>
<svg style="left:1296px;top:71px;" width="20" height="30" viewBox="0 0 20 30"><circle cx="6" cy="5.1" r="2.5" fill="none" stroke="#ffffff" stroke-width="1.5"/><circle cx="6" cy="14.3" r="3.5" fill="none" stroke="#ffffff" stroke-width="1.6"/><circle cx="6" cy="23.7" r="2.5" fill="none" stroke="#ffffff" stroke-width="1.5"/><circle cx="13.8" cy="9.9" r="2.4" fill="none" stroke="#ffffff" stroke-width="1.5"/><circle cx="13.8" cy="19" r="2.4" fill="none" stroke="#ffffff" stroke-width="1.5"/><path d="M6,7.6 V10.8 M6,17.8 V21.2 M9.2,12.6 L11.6,11.2 M9.2,16 L11.6,17.6" stroke="#ffffff" stroke-width="1.5"/></svg>
<svg style="left:1317.3px;top:80px;" width="34.0" height="10.9" viewBox="0 0 34.3 11"><path d="M1.35,0.6 V10 M1.9,7 L6,3.2 M3.4,5.8 L6.3,10" fill="none" stroke="#ffffff" stroke-width="1.75"/><circle cx="10.2" cy="6.5" r="2.75" fill="none" stroke="#ffffff" stroke-width="1.75"/><path d="M13.8,3 V10" stroke="#ffffff" stroke-width="1.75"/><path d="M17,10 V3.2 Q17,0.9 19.6,1 M15.2,3.9 H19.2" fill="none" stroke="#ffffff" stroke-width="1.75"/><path d="M21.5,0.6 V10 M22.05,7 L26.15,3.2 M23.55,5.8 L26.45,10" fill="none" stroke="#ffffff" stroke-width="1.75"/><circle cx="29.8" cy="6.5" r="2.75" fill="none" stroke="#ffffff" stroke-width="1.75"/><path d="M33.4,3 V10" stroke="#ffffff" stroke-width="1.75"/></svg>
<svg style="left:392px;top:127px;" width="16" height="16" viewBox="0 0 16 16"><rect x="1.6" y="1.6" width="8" height="8" fill="none" stroke="#1e1e1e" stroke-width="1.3"/><path d="M11.6,7 H14 V14 H7 V11.6" fill="none" stroke="#1e1e1e" stroke-width="1.8"/></svg>
<svg style="left:1024px;top:124px;" width="14" height="18" viewBox="0 0 14 18"><path d="M7,15.4 V2.6 M2.6,7 L7,2.4 L11.4,7" fill="none" stroke="#a8a8a8" stroke-width="1.7"/></svg>
<svg style="left:1088px;top:124px;" width="14" height="18" viewBox="0 0 14 18"><path d="M7,2.6 V15.4 M2.6,11 L7,15.6 L11.4,11" fill="none" stroke="#a8a8a8" stroke-width="1.7"/></svg>
<svg style="left:1329px;top:123px;" width="22" height="22" viewBox="0 0 22 22"><rect x="0.5" y="0.5" width="21" height="21" fill="none" stroke="#555555" stroke-width="1.1"/><path d="M5.4,5.4 L9.4,9.4 M16.6,5.4 L12.6,9.4 M5.4,16.6 L9.4,12.6 M16.6,16.6 L12.6,12.6" stroke="#555555" stroke-width="1.7"/><path d="M3.2,3.2 H8.6 L3.2,8.6 Z M18.8,3.2 H13.4 L18.8,8.6 Z M3.2,18.8 H8.6 L3.2,13.4 Z M18.8,18.8 H13.4 L18.8,13.4 Z" fill="#555555"/></svg>
<div class="a" style="left:388px;top:198px;width:16px;height:16px;background:#ffffff;border:1px solid #b4b4b4;"></div>
<div class="a" style="left:388px;top:490px;width:16px;height:16px;background:#ffffff;border:1px solid #b4b4b4;"></div>
<div class="a" style="left:388px;top:524px;width:16px;height:16px;background:#ffffff;border:1px solid #b4b4b4;"></div>
<div class="a" style="left:388px;top:558px;width:16px;height:16px;background:#ffffff;border:1px solid #b4b4b4;"></div>
<div class="a" style="left:388px;top:592px;width:16px;height:16px;background:#ffffff;border:1px solid #b4b4b4;"></div>
<div class="a" style="left:388px;top:626px;width:16px;height:16px;background:#ffffff;border:1px solid #b4b4b4;"></div>
<div class="a" style="left:388px;top:660px;width:16px;height:16px;background:#ffffff;border:1px solid #b4b4b4;"></div>
<div class="a" style="left:397px;top:313px;width:16px;height:16px;background:#ffffff;border:1px solid #b4b4b4;"></div>
<div class="a" style="left:620px;top:313px;width:16px;height:16px;background:#ffffff;border:1px solid #b4b4b4;"></div>
<div class="a" style="left:397px;top:346px;width:16px;height:16px;background:#ffffff;border:1px solid #b4b4b4;"></div>
<div class="a" style="left:620px;top:346px;width:16px;height:16px;background:#ffffff;border:1px solid #b4b4b4;"></div>
<div class="a" style="left:397px;top:379px;width:16px;height:16px;background:#ffffff;border:1px solid #b4b4b4;"></div>
<div class="a" style="left:620px;top:379px;width:16px;height:16px;background:#ffffff;border:1px solid #b4b4b4;"></div>
<svg style="left:1329px;top:196px;" width="16" height="20" viewBox="0 0 16 20"><rect x="0.2" y="1.2" width="13.8" height="2" fill="#444"/><rect x="4.4" y="0" width="5.4" height="1.6" rx="0.6" fill="#444"/><path d="M1.2,4 H13 V17 Q13,19 11,19 H3.2 Q1.2,19 1.2,17 Z" fill="#444"/><rect x="4" y="6.4" width="2" height="9.4" fill="#f4f4f4"/><rect x="8.2" y="6.4" width="2" height="9.4" fill="#f4f4f4"/></svg>
<svg style="left:1329px;top:488px;" width="16" height="20" viewBox="0 0 16 20"><rect x="0.2" y="1.2" width="13.8" height="2" fill="#444"/><rect x="4.4" y="0" width="5.4" height="1.6" rx="0.6" fill="#444"/><path d="M1.2,4 H13 V17 Q13,19 11,19 H3.2 Q1.2,19 1.2,17 Z" fill="#444"/><rect x="4" y="6.4" width="2" height="9.4" fill="#f4f4f4"/><rect x="8.2" y="6.4" width="2" height="9.4" fill="#f4f4f4"/></svg>
<svg style="left:1329px;top:522px;" width="16" height="20" viewBox="0 0 16 20"><rect x="0.2" y="1.2" width="13.8" height="2" fill="#444"/><rect x="4.4" y="0" width="5.4" height="1.6" rx="0.6" fill="#444"/><path d="M1.2,4 H13 V17 Q13,19 11,19 H3.2 Q1.2,19 1.2,17 Z" fill="#444"/><rect x="4" y="6.4" width="2" height="9.4" fill="#f4f4f4"/><rect x="8.2" y="6.4" width="2" height="9.4" fill="#f4f4f4"/></svg>
<svg style="left:1329px;top:556px;" width="16" height="20" viewBox="0 0 16 20"><rect x="0.2" y="1.2" width="13.8" height="2" fill="#444"/><rect x="4.4" y="0" width="5.4" height="1.6" rx="0.6" fill="#444"/><path d="M1.2,4 H13 V17 Q13,19 11,19 H3.2 Q1.2,19 1.2,17 Z" fill="#444"/><rect x="4" y="6.4" width="2" height="9.4" fill="#f4f4f4"/><rect x="8.2" y="6.4" width="2" height="9.4" fill="#f4f4f4"/></svg>
<svg style="left:1329px;top:590px;" width="16" height="20" viewBox="0 0 16 20"><rect x="0.2" y="1.2" width="13.8" height="2" fill="#444"/><rect x="4.4" y="0" width="5.4" height="1.6" rx="0.6" fill="#444"/><path d="M1.2,4 H13 V17 Q13,19 11,19 H3.2 Q1.2,19 1.2,17 Z" fill="#444"/><rect x="4" y="6.4" width="2" height="9.4" fill="#f4f4f4"/><rect x="8.2" y="6.4" width="2" height="9.4" fill="#f4f4f4"/></svg>
<svg style="left:1329px;top:624px;" width="16" height="20" viewBox="0 0 16 20"><rect x="0.2" y="1.2" width="13.8" height="2" fill="#444"/><rect x="4.4" y="0" width="5.4" height="1.6" rx="0.6" fill="#444"/><path d="M1.2,4 H13 V17 Q13,19 11,19 H3.2 Q1.2,19 1.2,17 Z" fill="#444"/><rect x="4" y="6.4" width="2" height="9.4" fill="#f4f4f4"/><rect x="8.2" y="6.4" width="2" height="9.4" fill="#f4f4f4"/></svg>
<svg style="left:1329px;top:658px;" width="16" height="20" viewBox="0 0 16 20"><rect x="0.2" y="1.2" width="13.8" height="2" fill="#444"/><rect x="4.4" y="0" width="5.4" height="1.6" rx="0.6" fill="#444"/><path d="M1.2,4 H13 V17 Q13,19 11,19 H3.2 Q1.2,19 1.2,17 Z" fill="#444"/><rect x="4" y="6.4" width="2" height="9.4" fill="#f4f4f4"/><rect x="8.2" y="6.4" width="2" height="9.4" fill="#f4f4f4"/></svg>
<svg style="left:742.6px;top:282px;" width="11" height="12" viewBox="0 0 11 12"><path d="M5,0.8 V10.4 M0.8,6.2 L5,10.6 L9.2,6.2" fill="none" stroke="#54a41e" stroke-width="1.9"/></svg>
<div class="a" style="left:756px;top:283px;width:10px;height:11px;background:#e05a2a;"></div>
<div class="t" style="left:756px;top:283.8px;width:10px;text-align:center;font-size:10px;color:#fff">B</div>
<svg style="left:922px;top:282px;" width="11" height="12" viewBox="0 0 11 12"><path d="M5,0.8 V10.4 M0.8,6.2 L5,10.6 L9.2,6.2" fill="none" stroke="#54a41e" stroke-width="1.9"/></svg>
<div class="a" style="left:935.2px;top:283px;width:10px;height:11px;background:#e05a2a;"></div>
<div class="t" style="left:935.2px;top:283.8px;width:10px;text-align:center;font-size:10px;color:#fff">S</div>
<svg style="left:1056px;top:282px;" width="11" height="12" viewBox="0 0 11 12"><path d="M5,0.8 V10.4 M0.8,6.2 L5,10.6 L9.2,6.2" fill="none" stroke="#54a41e" stroke-width="1.9"/></svg>
<div class="a" style="left:1069px;top:283px;width:10px;height:11px;background:#e05a2a;"></div>
<div class="t" style="left:1069px;top:283.8px;width:10px;text-align:center;font-size:10px;color:#fff">S</div>
<svg style="left:1176.5px;top:282px;" width="11" height="12" viewBox="0 0 11 12"><path d="M5,0.8 V10.4 M0.8,6.2 L5,10.6 L9.2,6.2" fill="none" stroke="#54a41e" stroke-width="1.9"/></svg>
<div class="a" style="left:1189.5px;top:283px;width:10px;height:11px;background:#e05a2a;"></div>
<div class="t" style="left:1189.5px;top:283.8px;width:10px;text-align:center;font-size:10px;color:#fff">S</div>
<svg style="left:1295.6px;top:282px;" width="11" height="12" viewBox="0 0 11 12"><path d="M5,11.6 V1.8 M0.8,6 L5,1.6 L9.2,6" fill="none" stroke="#f07272" stroke-width="1.9"/></svg>
<div class="a" style="left:1309px;top:283px;width:10px;height:11px;background:#e05a2a;"></div>
<div class="t" style="left:1309px;top:283.8px;width:10px;text-align:center;font-size:10px;color:#fff">B</div>
<svg style="left:390px;top:460px;" width="10" height="10" viewBox="0 0 10 10"><path d="M7,1 V9 L2.4,5 Z" fill="#5a5a5a"/></svg>
<svg style="left:1336px;top:460px;" width="10" height="10" viewBox="0 0 10 10"><path d="M3,1 V9 L7.6,5 Z" fill="#5a5a5a"/></svg>
<svg style="left:17px;top:737px;" width="22" height="22" viewBox="0 0 22 22"><path d="M1,3.6 L8.6,2.6 V10 H1 Z M9.8,2.4 L21,1 V10 H9.8 Z M1,11.2 H8.6 V18.6 L1,17.6 Z M9.8,11.2 H21 V20.2 L9.8,18.8 Z" fill="#ffffff"/></svg>
<svg style="left:89px;top:738px;" width="22" height="20" viewBox="0 0 22 20"><path d="M20.6,10 H2.2 M10,2 L2,10 L10,18" fill="none" stroke="#ffffff" stroke-width="1.5"/></svg>
<svg style="left:161px;top:737px;" width="22" height="22" viewBox="0 0 22 22"><circle cx="11" cy="11" r="8" fill="none" stroke="#ffffff" stroke-width="2.6"/></svg>
<svg style="left:231px;top:736px;" width="27" height="24" viewBox="0 0 27 24"><rect x="5.3" y="3.9" width="15.7" height="16.6" fill="none" stroke="#ffffff" stroke-width="1.3"/><path d="M3.4,6.6 H1.8 V17.4 H3.4 M22.8,6.6 H24.4 V17.4 H22.8" fill="none" stroke="#ffffff" stroke-width="1.1"/></svg>
<svg style="left:297px;top:737px;" width="22" height="22" viewBox="0 0 22 22"><path d="M2,11.6 C2,5 6.4,1 12,1 C17.6,1 21,4.6 21,10.6 V12.6 H7.6 C7.8,16.2 10.6,18 14,18 C16.6,18 18.8,17.2 20.4,16.2 V20 C18.6,21 16.2,21.6 13.4,21.6 C6.6,21.6 2,17.6 2,11.6 Z M7.8,9.2 H15.8 C15.8,6.6 14.4,5 12,5 C9.6,5 8.2,6.8 7.8,9.2 Z" fill="#1e88e5"/></svg>
<svg style="left:345px;top:738px;" width="23" height="20" viewBox="0 0 23 20"><path d="M1,2 H8 L10,4 H21.6 V18.4 H1 Z" fill="#e8b94a"/><path d="M1,7 H21.6 V18.4 H1 Z" fill="#f6d26e"/><rect x="6" y="11.4" width="11" height="7" fill="#4aa3df"/><rect x="8.4" y="13.6" width="6.2" height="4.8" fill="#f6d26e"/></svg>
<svg style="left:395px;top:736px;" width="23" height="24" viewBox="0 0 23 24"><path d="M7,7 Q7,1.6 11.5,1.6 Q16,1.6 16,7" fill="none" stroke="#fff" stroke-width="1.4"/><path d="M1.6,6.6 H21.4 V21.6 H1.6 Z" fill="#ffffff"/><path d="M7.4,10.2 H11 V13.6 H7.4 Z M12,10.2 H15.6 V13.6 H12 Z M7.4,14.6 H11 V18 H7.4 Z M12,14.6 H15.6 V18 H12 Z" fill="#000"/></svg>
<svg style="left:444px;top:737px;" width="22" height="22" viewBox="0 0 22 22"><circle cx="11" cy="11" r="10.4" fill="#db4437"/><path d="M11,11 L20.0,5.8 A10.4,10.4 0 0,1 11.0,21.4 Z" fill="#f4c20d"/><path d="M11,11 L11,21.4 A10.4,10.4 0 0,1 2.0,5.8 Z" fill="#0f9d58"/><circle cx="11" cy="11" r="4.8" fill="#fff"/><circle cx="11" cy="11" r="3.8" fill="#4285f4"/></svg>
<svg style="left:493px;top:737px;" width="23" height="23" viewBox="0 0 23 23"><circle cx="11.5" cy="11.5" r="11" fill="#1ed760"/><path d="M5,8.2 Q11.6,6.2 18.2,9 M5.8,11.6 Q11.4,10 17,12.4 M6.6,14.8 Q11,13.6 15.6,15.6" fill="none" stroke="#000" stroke-width="1.8" stroke-linecap="round"/></svg>
<svg style="left:541px;top:736px;" width="26" height="24" viewBox="0 0 26 24"><path d="M2,1.4 H23.6 Q24.6,1.4 24.6,2.4 V18.6 Q24.6,19.6 23.6,19.6 H15.6 L12.8,22.6 L10,19.6 H2 Q1,19.6 1,18.6 V2.4 Q1,1.4 2,1.4 Z" fill="#1da1f2"/><path d="M6,14.6 Q10.8,15.6 14.4,12.4 Q17.4,9.4 17.6,6.6 L19.6,5.4 L17.6,5.6 Q16.2,3.8 14.2,4.6 Q12.4,5.6 12.8,7.8 Q9.6,7.6 6.8,5 Q6,7.6 8.2,9.4 Q7.4,9.4 6.8,9 Q7,11.4 9.4,12 Q8.6,12.4 7.8,12.2 Q8.6,13.8 10.6,14 Q8.6,14.8 6,14.6 Z" fill="#fff"/></svg>
<svg style="left:592px;top:737px;" width="22" height="22" viewBox="0 0 22 22"><path d="M2.6,3.2 L18.6,1 L20.6,18.6 L3.8,21 Z" fill="#ffffff"/><path d="M2.6,3.2 L10.6,2.1 L11,7 L3.2,8 Z" fill="#3eb991"/><path d="M18.6,1 L19.6,9.6 L14.4,10.2 L13.6,1.7 Z" fill="#e9a820"/><path d="M20.6,18.6 L12,19.8 L11.6,14.6 L20,13.6 Z" fill="#e01765"/><path d="M3.8,21 L3,12.6 L8.2,12 L9,20.3 Z" fill="#6ecadc"/><rect x="4.6" y="4.6" width="13" height="13" transform="rotate(-7 11 11)" fill="#fff"/></svg>
<div class="t" style="left:602.2px;top:743.00px;font-size:13px;color:#3c2a3e;font-weight:bold;font-family:'Liberation Sans';transform:rotate(-8deg)">S</div>
<svg style="left:640px;top:736px;" width="25" height="24" viewBox="0 0 25 24"><rect x="1" y="1" width="23" height="22" fill="#1d6f42"/><rect x="10.6" y="4" width="11.4" height="16" fill="#fff" opacity="0.95"/><path d="M12.2,7.6 H20.4 M12.2,11 H20.4 M12.2,14.4 H20.4 M16.4,5.2 V18.8" stroke="#1d6f42" stroke-width="1.2"/><rect x="1" y="3.2" width="11.4" height="17.6" fill="#185c37"/><path d="M3.6,6.8 L9.6,16.6 M9.6,6.8 L3.6,16.6" stroke="#fff" stroke-width="2"/></svg>
<svg style="left:690px;top:736px;" width="24" height="24" viewBox="0 0 24 24"><rect x="1" y="1" width="22" height="22" fill="#80397b"/><rect x="10.4" y="4" width="11" height="16" fill="#fff"/><path d="M18,6.6 H20.6 M18,10 H20.6 M18,13.4 H20.6" stroke="#80397b" stroke-width="1.6"/><rect x="1" y="3.2" width="13" height="17.6" fill="#6d2e69"/><path d="M4.6,16.6 V7.2 L10.4,16.6 V7.2" fill="none" stroke="#fff" stroke-width="1.8"/></svg>
<svg style="left:1108px;top:741px;" width="16" height="16" viewBox="0 0 16 16"><circle cx="8" cy="7.6" r="6.4" fill="none" stroke="#ffffff" stroke-width="1.3"/><circle cx="8" cy="7.6" r="3.3" fill="#ffffff"/></svg>
<svg style="left:1146px;top:740px;" width="20" height="16" viewBox="0 0 20 16"><path d="M3.6,1.6 V4.4 M6.4,1.6 V4.4 M2.4,4.4 H7.6 V7 Q5,9.4 2.4,7 Z M5,8.4 V11 H6.4" fill="none" stroke="#ffffff" stroke-width="1.1"/><rect x="5.8" y="4.8" width="11.6" height="7.6" fill="none" stroke="#ffffff" stroke-width="1.2"/><rect x="7.4" y="6.4" width="8.4" height="4.4" fill="#ffffff"/><rect x="17.4" y="7" width="1.4" height="3.2" fill="#ffffff"/></svg>
<svg style="left:1189px;top:739px;" width="16" height="18" viewBox="0 0 16 18"><path d="M1.6,15.6 Q1.8,4.6 13.6,3.4 M4.4,15.6 Q4.6,7.4 13,6.6 M7.4,15.6 Q7.4,10.2 12.6,9.6" fill="none" stroke="#ffffff" stroke-width="1.1"/><rect x="10.4" y="11.6" width="4" height="4" fill="#ffffff"/></svg>
<svg style="left:1226px;top:739px;" width="18" height="18" viewBox="0 0 18 18"><path d="M1.6,6.4 H4.6 L8.4,2.4 V15.6 L4.6,11.6 H1.6 Z" fill="none" stroke="#ffffff" stroke-width="1.1"/><path d="M11.2,6.4 L16,11.2 M16,6.4 L11.2,11.2" stroke="#ffffff" stroke-width="1.2"/></svg>
<svg style="left:1267px;top:739px;" width="18" height="19" viewBox="0 0 18 19"><path d="M1,1 H17 V13 H11 L8.6,15.8 L6.2,13 H1 Z" fill="none" stroke="#ffffff" stroke-width="1.2"/><path d="M4,4.6 H14 M4,7.4 H14 M4,10.2 H10" stroke="#ffffff" stroke-width="1"/></svg>
</body></html>
